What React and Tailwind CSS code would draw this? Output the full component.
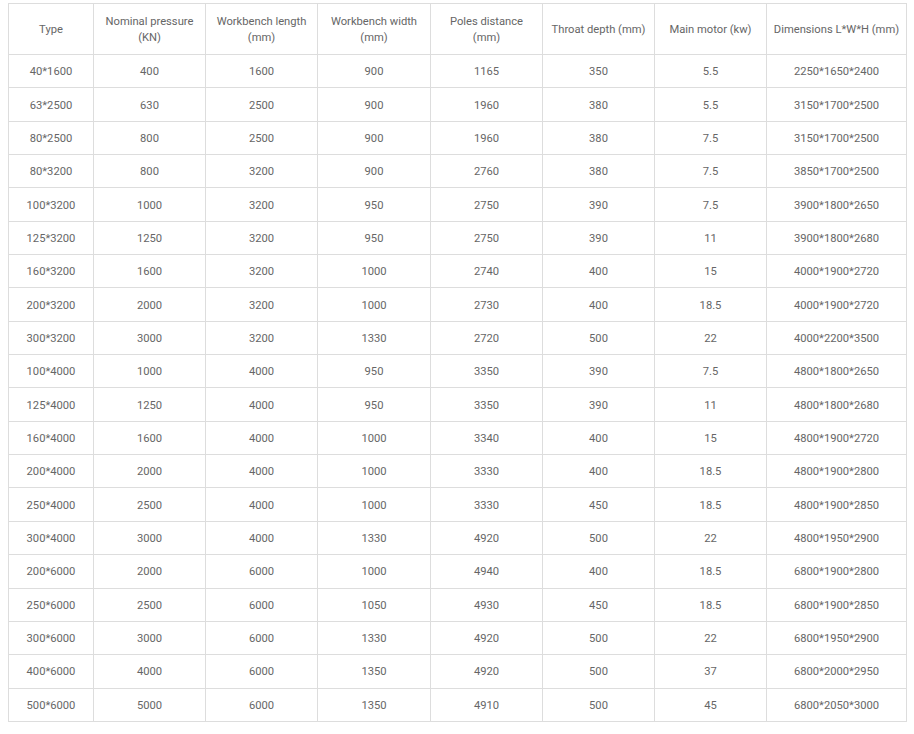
const headers = [
  ["Type"],
  ["Nominal pressure", "(KN)"],
  ["Workbench length", "(mm)"],
  ["Workbench width", "(mm)"],
  ["Poles distance", "(mm)"],
  ["Throat depth (mm)"],
  ["Main motor (kw)"],
  ["Dimensions L*W*H (mm)"],
];

const widths = ["w-[85px]", "w-[112px]", "w-[112px]", "w-[113px]", "w-[112px]", "w-[112px]", "w-[112px]", "w-[140px]"];

const rows = [
  ["40*1600", "400", "1600", "900", "1165", "350", "5.5", "2250*1650*2400"],
  ["63*2500", "630", "2500", "900", "1960", "380", "5.5", "3150*1700*2500"],
  ["80*2500", "800", "2500", "900", "1960", "380", "7.5", "3150*1700*2500"],
  ["80*3200", "800", "3200", "900", "2760", "380", "7.5", "3850*1700*2500"],
  ["100*3200", "1000", "3200", "950", "2750", "390", "7.5", "3900*1800*2650"],
  ["125*3200", "1250", "3200", "950", "2750", "390", "11", "3900*1800*2680"],
  ["160*3200", "1600", "3200", "1000", "2740", "400", "15", "4000*1900*2720"],
  ["200*3200", "2000", "3200", "1000", "2730", "400", "18.5", "4000*1900*2720"],
  ["300*3200", "3000", "3200", "1330", "2720", "500", "22", "4000*2200*3500"],
  ["100*4000", "1000", "4000", "950", "3350", "390", "7.5", "4800*1800*2650"],
  ["125*4000", "1250", "4000", "950", "3350", "390", "11", "4800*1800*2680"],
  ["160*4000", "1600", "4000", "1000", "3340", "400", "15", "4800*1900*2720"],
  ["200*4000", "2000", "4000", "1000", "3330", "400", "18.5", "4800*1900*2800"],
  ["250*4000", "2500", "4000", "1000", "3330", "450", "18.5", "4800*1900*2850"],
  ["300*4000", "3000", "4000", "1330", "4920", "500", "22", "4800*1950*2900"],
  ["200*6000", "2000", "6000", "1000", "4940", "400", "18.5", "6800*1900*2800"],
  ["250*6000", "2500", "6000", "1050", "4930", "450", "18.5", "6800*1900*2850"],
  ["300*6000", "3000", "6000", "1330", "4920", "500", "22", "6800*1950*2900"],
  ["400*6000", "4000", "6000", "1350", "4920", "500", "37", "6800*2000*2950"],
  ["500*6000", "5000", "6000", "1350", "4910", "500", "45", "6800*2050*3000"],
];

export default function App() {
  return (
    <div className="pl-2 pt-[3px] bg-white min-h-[734px] text-[#666] text-[11.2px] font-['Roboto',sans-serif]">
      <table className="border-collapse table-fixed w-[899px]">
        <colgroup>
          {widths.map((w, i) => (
            <col key={i} className={w} />
          ))}
        </colgroup>
        <thead>
          <tr className="h-[51px]">
            {headers.map((h, i) => (
              <th key={i} className="border border-[#ddd] font-normal text-center leading-[16px] px-1 pt-[2px] pb-0 whitespace-nowrap">
                {h.map((line, j) => (
                  <div key={j}>{line}</div>
                ))}
              </th>
            ))}
          </tr>
        </thead>
        <tbody>
          {rows.map((r, ri) => (
            <tr key={ri} className="h-[33.35px]">
              {r.map((c, ci) => (
                <td key={ci} className="border border-[#ddd] text-center leading-[16px] px-0 pt-[2px] pb-0">
                  {c}
                </td>
              ))}
            </tr>
          ))}
        </tbody>
      </table>
    </div>
  );
}
